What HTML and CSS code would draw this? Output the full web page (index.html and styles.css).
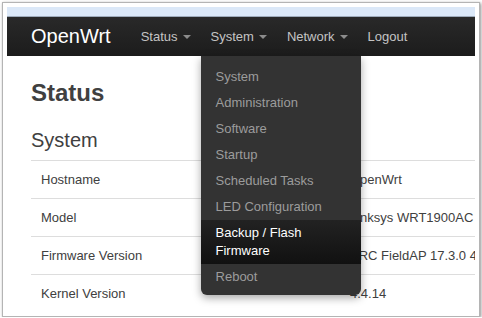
FILE: index.html
```html
<!DOCTYPE html>
<html lang="en">
<head>
  <meta charset="UTF-8" />
  <title>OpenWrt - Status</title>
  <link rel="stylesheet" href="styles.css">
</head>
<body>
  <div class="frame">
    <div class="page">
      <div class="tabstrip"></div>

      <header class="navbar">
        <a class="brand">OpenWrt</a>
        <ul class="nav">
          <li class="nav-item"><a>Status<span class="caret"></span></a></li>
          <li class="nav-item open">
            <a>System<span class="caret"></span></a>
            <ul class="dropdown">
              <li><a>System</a></li>
              <li><a>Administration</a></li>
              <li><a>Software</a></li>
              <li><a>Startup</a></li>
              <li><a>Scheduled Tasks</a></li>
              <li><a>LED Configuration</a></li>
              <li class="active"><a>Backup / Flash Firmware</a></li>
              <li><a>Reboot</a></li>
            </ul>
          </li>
          <li class="nav-item"><a>Network<span class="caret"></span></a></li>
          <li class="nav-item"><a>Logout</a></li>
        </ul>
      </header>

      <main class="content">
        <h1>Status</h1>
        <h2>System</h2>
        <table class="info">
          <tr><td>Hostname</td><td>OpenWrt</td></tr>
          <tr><td>Model</td><td>Linksys WRT1900AC</td></tr>
          <tr><td>Firmware Version</td><td>ARC FieldAP 17.3.0 4.4.14</td></tr>
          <tr><td>Kernel Version</td><td>4.4.14</td></tr>
        </table>
      </main>
    </div>
  </div>
</body>
</html>
```

FILE: styles.css
```css
body {
  margin: 0;
  background: #fff;
  font-family: "Liberation Sans", Arial, sans-serif;
  font-size: 13px;
  line-height: 18px;
  color: #404040;
}
.frame {
  margin: 2px 0 0 2px;
  width: 468px;
  padding: 4px;
  border: 1px solid #b4b4b4;
  box-shadow: 1px 1px 3px rgba(0, 0, 0, 0.45);
}
.page {
  position: relative;
  height: 305px;
  overflow: hidden;
  background: #fff;
}
.tabstrip {
  height: 9px;
  background: #dbe8f8;
  border-bottom: 1px solid #9eabbb;
}
.navbar {
  display: flex;
  align-items: center;
  height: 39px;
  padding-left: 24px;
  background: linear-gradient(#292929, #1c1c1c);
}
.brand {
  font-size: 20px;
  line-height: 24px;
  color: #fff;
  padding: 0 20px 2px 0;
}
.nav {
  display: flex;
  height: 100%;
  margin: 0;
  padding: 0;
  list-style: none;
}
.nav-item {
  position: relative;
  display: flex;
  align-items: center;
}
.nav-item > a {
  display: flex;
  align-items: center;
  padding: 0 10px;
  color: #c4c4c4;
}
.caret {
  width: 0;
  height: 0;
  margin-left: 5px;
  border-left: 4px solid transparent;
  border-right: 4px solid transparent;
  border-top: 4px solid #8c8c8c;
}
.dropdown {
  position: absolute;
  top: 100%;
  left: 0;
  z-index: 10;
  width: 160px;
  margin: 0;
  padding: 8px 0 5px;
  list-style: none;
  background: #333;
  border-radius: 0 0 6px 6px;
  box-shadow: 0 3px 8px rgba(0, 0, 0, 0.35);
}
.dropdown a {
  display: block;
  padding: 4px 15px;
  color: #9c9c9c;
}
.dropdown .active a {
  color: #fff;
  background: linear-gradient(#222, #111);
}
.content {
  padding: 23px 0 0 24px;
}
h1 {
  margin: 0;
  font-size: 24px;
  line-height: 28px;
  font-weight: bold;
}
h2 {
  margin: 21px 0 8px;
  font-size: 20px;
  line-height: 24px;
  font-weight: normal;
}
.info {
  width: 444px;
  table-layout: fixed;
  border-collapse: collapse;
}
.info td {
  padding: 10px 10px 9px;
  border-top: 1px solid #ddd;
  white-space: nowrap;
  overflow: hidden;
}
.info td:first-child {
  width: 289px;
}
```
